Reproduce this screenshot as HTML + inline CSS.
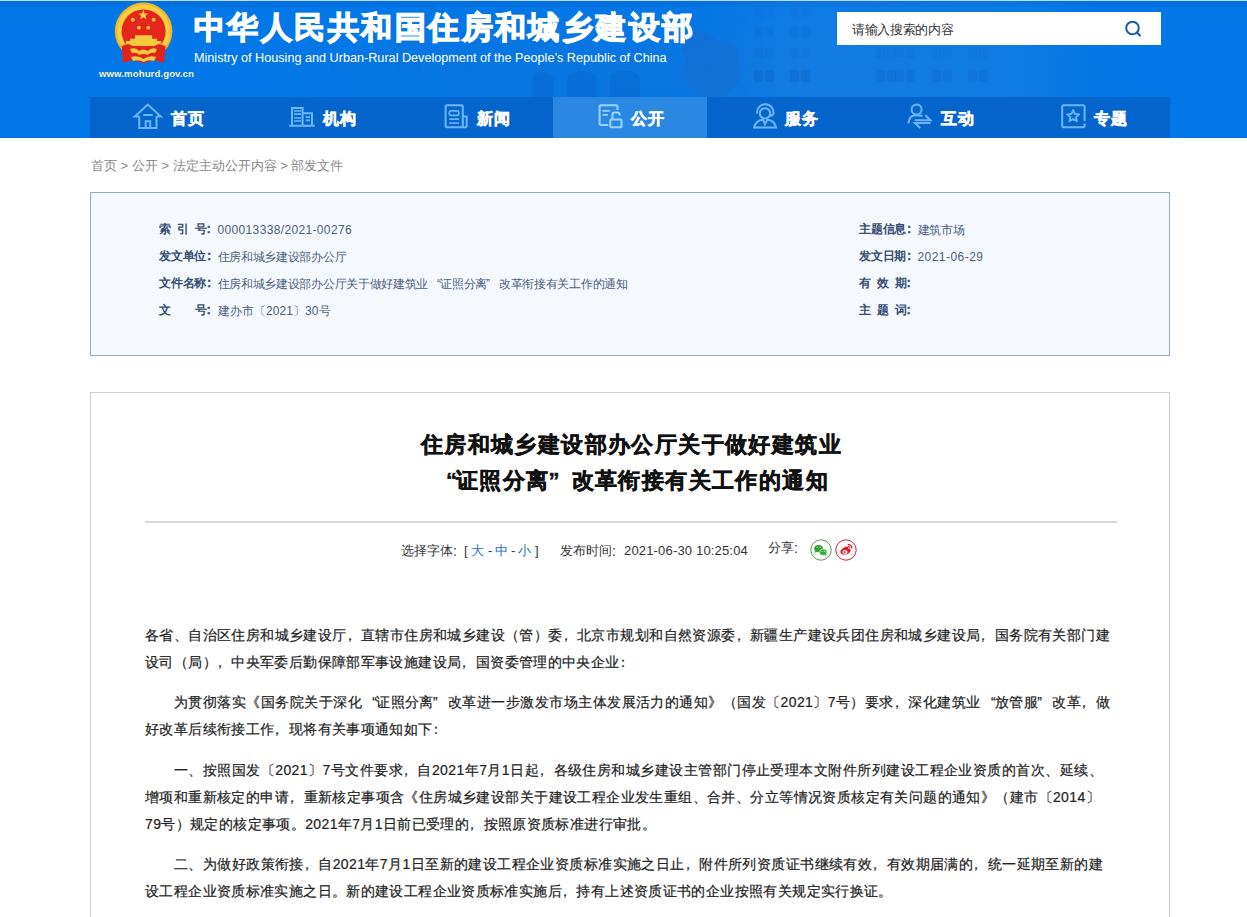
<!DOCTYPE html>
<html><head><meta charset="utf-8">
<style>
*{margin:0;padding:0;box-sizing:border-box}
html,body{width:1247px;height:917px;overflow:hidden;background:#fff;font-family:"Liberation Sans",sans-serif;color:#333}
.hd{position:absolute;left:0;top:0;width:1247px;height:138px;background:#0277e8;overflow:hidden}
.bg1{position:absolute;left:230px;top:0;width:900px;height:97px;background:radial-gradient(ellipse at 55% 75%, rgba(60,110,180,0.14), rgba(60,110,180,0.07) 50%, rgba(25,70,150,0) 75%)}
.topdk{position:absolute;left:0;top:1px;width:1247px;height:6px;background:rgba(10,40,110,0.07)}
.hd .topline{position:absolute;left:0;top:0;width:1247px;height:1px;background:#bcd9f5}
.logo{position:absolute;left:113px;top:2px;width:60px;height:62px}
.url{position:absolute;left:99px;top:68px;font-size:9.6px;font-weight:bold;color:#f4f1c4;letter-spacing:0.1px;white-space:nowrap}
.title{position:absolute;left:194px;top:7px;font-size:31px;font-weight:bold;color:#fff;white-space:nowrap;letter-spacing:2.45px;-webkit-text-stroke:1.3px #fff}
.en{position:absolute;left:194px;top:51px;font-size:12.65px;color:#fff;white-space:nowrap}
.search{position:absolute;left:837px;top:12px;width:324px;height:33px;background:#fff}
.search span{position:absolute;left:15px;top:9px;font-size:13px;letter-spacing:-0.35px;color:#333;white-space:nowrap}
.search svg{position:absolute;left:286px;top:7px}
.nav{position:absolute;left:90px;top:97px;width:1080px;height:41px;background:#0665cc}
.nav .it{position:absolute;top:0;height:41px;width:154.3px}
.nav .it.on{background:#2a88e2}
.nav .it svg{position:absolute;top:3px;left:0}
.ic{position:absolute}
.nt{position:absolute;top:109px;font-size:16px;letter-spacing:1px;color:#fff;white-space:nowrap;-webkit-text-stroke:0.5px #fff;margin-left:0.5px}
.crumb{position:absolute;left:91px;top:157px;font-size:13px;color:#888;white-space:nowrap}
.info{position:absolute;left:90px;top:192px;width:1080px;height:164px;background:#f5f9fe;border:1px solid #93acc6}
.row{position:absolute;font-size:12px;color:#4b5f7e;white-space:nowrap;height:16px;line-height:16px}
.row span{padding-top:1px}
.row i{position:absolute;top:0px;font-size:12px;font-style:normal;color:#354d72;font-weight:bold}
.row i.cl{top:0;font-size:13px;-webkit-text-stroke:0.3px #354d72}
q{quotes:none;display:inline-block;width:1em;text-align:right;text-align-last:right;letter-spacing:0;position:relative;left:1px}
q.r{text-align:left;text-align-last:left;left:-1px}
.row span{position:absolute;left:58.5px;top:0;letter-spacing:-0.3px}
.art{position:absolute;left:90px;top:392px;width:1080px;height:525px;border:1px solid #d0d0d0;border-bottom:none;background:#fff}
.t{position:absolute;left:1.5px;width:1078px;text-align:center;font-size:22px;letter-spacing:1.4px;font-weight:bold;color:#111;-webkit-text-stroke:0.5px #111;white-space:nowrap;height:36px;line-height:36px}
.hr{position:absolute;left:54px;top:128px;width:972px;height:2px;background:#d8d8d8}
.meta{position:absolute;top:150px;font-size:13px;color:#333;white-space:nowrap;height:16px;line-height:16px}
.meta a{color:#2b6cc4;text-decoration:none}
.meta.cl{font-size:14px}
.p{position:absolute;left:54px;width:965px;font-size:14px;letter-spacing:0.38px;color:#222;-webkit-text-stroke:0.2px #222;white-space:nowrap;height:27px;line-height:27px}
.j{text-align:justify;text-align-last:justify}
.p s{text-decoration:none;position:relative;left:-4px}
</style></head><body>
<div class="hd">
  <div class="bg1"></div>
  <svg class="bld" width="1247" height="97" viewBox="0 0 1247 97" style="position:absolute;left:0;top:0">
    <defs><linearGradient id="fg" x1="0" x2="1" y1="0" y2="0"><stop offset="0" stop-color="#fff" stop-opacity="0"/><stop offset="0.25" stop-color="#fff" stop-opacity="0.04"/><stop offset="0.75" stop-color="#fff" stop-opacity="0.04"/><stop offset="1" stop-color="#fff" stop-opacity="0"/></linearGradient></defs><rect x="700" y="0" width="400" height="97" fill="url(#fg)"/>
    <g fill="#0b3f9a"><rect x="754" y="7" width="9.0" height="10" opacity="0.05"/><rect x="765.0" y="7" width="9.0" height="10" opacity="0.05"/><rect x="790" y="7" width="9.0" height="10" opacity="0.05"/><rect x="801.0" y="7" width="9.0" height="10" opacity="0.05"/><rect x="754" y="27" width="9.0" height="10" opacity="0.065"/><rect x="765.0" y="27" width="9.0" height="10" opacity="0.065"/><rect x="790" y="27" width="9.0" height="10" opacity="0.065"/><rect x="801.0" y="27" width="9.0" height="10" opacity="0.065"/><rect x="754" y="48" width="9.0" height="10" opacity="0.06"/><rect x="765.0" y="48" width="9.0" height="10" opacity="0.06"/><rect x="790" y="48" width="9.0" height="10" opacity="0.06"/><rect x="801.0" y="48" width="9.0" height="10" opacity="0.06"/><rect x="754" y="70" width="9.0" height="12" opacity="0.15"/><rect x="765.0" y="70" width="9.0" height="12" opacity="0.15"/><rect x="790" y="70" width="9.0" height="12" opacity="0.15"/><rect x="801.0" y="70" width="9.0" height="12" opacity="0.15"/><rect x="876" y="48" width="9.0" height="10" opacity="0.06"/><rect x="887.0" y="48" width="9.0" height="10" opacity="0.06"/><rect x="895" y="48" width="9.0" height="10" opacity="0.06"/><rect x="906.0" y="48" width="9.0" height="10" opacity="0.06"/><rect x="932" y="48" width="9.0" height="10" opacity="0.06"/><rect x="943.0" y="48" width="9.0" height="10" opacity="0.06"/><rect x="968" y="48" width="9.0" height="10" opacity="0.06"/><rect x="979.0" y="48" width="9.0" height="10" opacity="0.06"/><rect x="876" y="70" width="9.0" height="12" opacity="0.12"/><rect x="887.0" y="70" width="9.0" height="12" opacity="0.12"/><rect x="895" y="70" width="9.0" height="12" opacity="0.12"/><rect x="906.0" y="70" width="9.0" height="12" opacity="0.12"/><rect x="932" y="70" width="9.0" height="12" opacity="0.12"/><rect x="943.0" y="70" width="9.0" height="12" opacity="0.12"/><rect x="968" y="70" width="9.0" height="12" opacity="0.12"/><rect x="979.0" y="70" width="9.0" height="12" opacity="0.12"/></g>
    <g fill="#0b4fb0" opacity="0.16">
      <path d="M532 97 V80 Q532 72 543 72 Q554 72 554 80 V97 Z"/>
      <path d="M567 97 V80 Q567 71 582 71 Q597 71 597 80 V97 Z"/>
      <path d="M610 97 V80 Q610 71 625 71 Q640 71 640 80 V97 Z"/>
    </g>
    <g fill="#0b4fb0" opacity="0.07">
      <rect x="330" y="62" width="26" height="10"/><rect x="395" y="62" width="26" height="10"/><rect x="445" y="62" width="26" height="10"/>
    </g>
    <g fill="#2f5fa8" opacity="0.2">
      <ellipse cx="712" cy="72" rx="28" ry="26"/>
      <ellipse cx="700" cy="48" rx="18" ry="16"/>
      <ellipse cx="725" cy="55" rx="14" ry="14"/>
    </g>
  </svg>
  <div class="topdk"></div><div class="topline"></div>
  <svg class="logo" style="left:108px;top:0;width:70px;height:66px" viewBox="0 0 70 66">
  <circle cx="35.6" cy="31.3" r="28.8" fill="#f2b62c"/>
  <circle cx="35.6" cy="31.3" r="26.5" fill="#f7cf3f"/>
  <circle cx="35.6" cy="31.4" r="22" fill="#e4261d"/>
  <polygon points="35.3,10 36.6,13.4 40.2,13.5 37.4,15.7 38.4,19.2 35.3,17.2 32.2,19.2 33.2,15.7 30.4,13.5 34,13.4" fill="#f9d245"/>
  <g fill="#f3c640"><circle cx="24.8" cy="19.8" r="2"/><circle cx="45.7" cy="19.8" r="2"/><circle cx="31" cy="27.7" r="1.9"/><circle cx="40.3" cy="27.7" r="1.9"/></g>
  <path d="M27 35.3 H44.2 V38.8 H27 Z M22 38.8 H49 V41 H22 Z M18 41 H53.2 V46 H18 Z" fill="#f6c93d"/>
  <path d="M13.7 46 L20 44 L35.6 50 L51 44 L57.6 46 L56 63 L46 60 L35.6 63.3 L25 60 L15 63 Z" fill="#e0241c"/>
  <path d="M22 49 Q28 47 31 51 Q35.6 48 40 51 Q43 47 49 49 L47 53 Q42 52 40 55 Q35.6 53 31 55 Q29 52 24 53 Z" fill="#f6c93d"/>
  <path d="M23 57 Q30 55 35.6 59 Q41 55 48 57 L46 61 Q40 59 35.6 62 Q31 59 25 61 Z" fill="#f6c93d"/>
</svg>
  <div class="title">中华人民共和国住房和城乡建设部</div>
  <div class="en">Ministry of Housing and Urban-Rural Development of the People’s Republic of China</div>
  <div class="url">www.mohurd.gov.cn</div>
  <div class="search"><span>请输入搜索的内容</span>
    <svg width="20" height="20" viewBox="0 0 20 20"><circle cx="9.5" cy="9" r="6.3" fill="none" stroke="#1d5ca8" stroke-width="2"/><path d="M14 13.5 L17 16.5" stroke="#1d5ca8" stroke-width="2" stroke-linecap="round"/></svg>
  </div>
  <div class="nav">
    <div class="it on" style="left:462.9px"></div>
  </div>
  <svg class="ic" style="left:130px;top:100px" width="40" height="32" viewBox="0 0 40 32" fill="none" stroke="#6db5fb" stroke-width="2">
    <path d="M9.25 16.6 H4.8 L17.8 4.6 L30.8 16.6 H26.5 M9.25 16.6 V27.9 H26.5 V16.6 M15.7 27.9 V21.2 H20.2 V27.9 M13.3 15 H22.7"/>
  </svg>
  <svg class="ic" style="left:284px;top:100px" width="40" height="32" viewBox="0 0 40 32" fill="none" stroke="#6db5fb" stroke-width="2">
    <path d="M8 25.8 V8 H18.6 V25.8 M18.6 13.2 H28 V25.8 M5.2 25.8 H30.7"/>
    <path d="M10.1 11 H17.1 M10.1 14.1 H17.1 M10.1 18 H17.1 M10.1 21 H17.1 M21.8 17.1 H26 M21.8 20.4 H26" stroke-width="1.6"/>
  </svg>
  <svg class="ic" style="left:438px;top:100px" width="40" height="32" viewBox="0 0 40 32" fill="none" stroke="#6db5fb" stroke-width="2">
    <path d="M24.8 27.3 H9 Q7.6 27.3 7.6 25.9 V6.6 Q7.6 5.2 9 5.2 H23.4 Q24.8 5.2 24.8 6.6 V27.3 H27.3 Q28.7 27.3 28.7 25.9 V16.4 H24.8"/>
    <rect x="11.3" y="10.9" width="9.5" height="4.5" rx="1.5" stroke-width="1.7"/>
    <path d="M11.2 19.2 H21 M11.2 23 H21" stroke-width="1.7"/>
  </svg>
  <svg class="ic" style="left:592px;top:100px" width="40" height="32" viewBox="0 0 40 32" fill="none" stroke="#9ad3ff" stroke-width="2">
    <path d="M25.5 10 V6.5 Q25.5 5.2 24.2 5.2 H8.9 Q7.6 5.2 7.6 6.5 V23.6 Q7.6 24.9 8.9 24.9 H16.3"/>
    <path d="M10.5 10.8 H17.8 M10.5 14.8 H16" stroke-width="1.8"/>
    <path d="M20.4 19.5 V14.5 Q20.4 12.4 22.5 12.4 H25.5 Q27.6 12.4 27.6 14.5 V15.5"/>
    <rect x="18.3" y="19.5" width="11.2" height="7.8" rx="0.8"/>
  </svg>
  <svg class="ic" style="left:746px;top:100px" width="40" height="32" viewBox="0 0 40 32" fill="none" stroke="#6db5fb" stroke-width="2">
    <path d="M11.2 13.6 A8.2 8.2 0 1 1 27.3 14.2 Q26.5 15.7 22.7 15.7"/>
    <circle cx="19" cy="13.4" r="5.2"/>
    <path d="M8.2 27.4 Q10 20.2 17 19.8 L19 24.2 L21.2 19.8 Q28.2 20.2 30 27.4 Z"/>
  </svg>
  <svg class="ic" style="left:900px;top:100px" width="40" height="32" viewBox="0 0 40 32" fill="none" stroke="#6db5fb" stroke-width="2">
    <circle cx="16.6" cy="9.6" r="5"/>
    <path d="M8.4 23.4 Q9 15.3 16 15.2 Q20 15.2 22.6 16"/>
    <path d="M14.7 20.2 H30.4 L25.3 15.2 M30.4 23.1 H15 L20.2 27.9"/>
  </svg>
  <svg class="ic" style="left:1054px;top:100px" width="40" height="32" viewBox="0 0 40 32" fill="none" stroke="#6db5fb" stroke-width="2">
    <path d="M30.6 21 V6.6 Q30.6 5.2 29.2 5.2 H9.6 Q8.2 5.2 8.2 6.6 V25.9 Q8.2 27.3 9.6 27.3 H29.2 Q30.6 27.3 30.6 25.9 V23.5"/>
    <polygon points="19.2,10 20.9,13.9 25.2,14.3 22,17.1 22.9,21.3 19.2,19.1 15.5,21.3 16.4,17.1 13.2,14.3 17.5,13.9" stroke-width="1.8" stroke-linejoin="round"/>
  </svg>
  <b class="nt" style="left:170px">首页</b>
  <b class="nt" style="left:322px">机构</b>
  <b class="nt" style="left:476px">新闻</b>
  <b class="nt" style="left:630px">公开</b>
  <b class="nt" style="left:784px">服务</b>
  <b class="nt" style="left:940px">互动</b>
  <b class="nt" style="left:1093px">专题</b>
</div>
</div>
<div class="crumb">首页 &gt; 公开 &gt; 法定主动公开内容 &gt; 部发文件</div>
<div class="info">
  <div class="row" style="left:68px;top:28px"><i style="left:0px">索</i><i style="left:18.3px">引</i><i style="left:35.6px">号</i><i class="cl" style="left:47.5px">:</i><span style="letter-spacing:0.35px">000013338/2021-00276</span></div>
  <div class="row" style="left:68px;top:55px"><i style="left:0px">发</i><i style="left:11.8px">文</i><i style="left:23.6px">单</i><i style="left:35.4px">位</i><i class="cl" style="left:48px">:</i><span>住房和城乡建设部办公厅</span></div>
  <div class="row" style="left:68px;top:82px"><i style="left:0px">文</i><i style="left:11.8px">件</i><i style="left:23.6px">名</i><i style="left:35.4px">称</i><i class="cl" style="left:48px">:</i><span>住房和城乡建设部办公厅关于做好建筑业<q>“</q>证照分离<q class="r">”</q>改革衔接有关工作的通知</span></div>
  <div class="row" style="left:68px;top:109px"><i style="left:0px">文</i><i style="left:35.6px">号</i><i class="cl" style="left:47.5px">:</i><span style="letter-spacing:0.1px">建办市〔2021〕30号</span></div>
  <div class="row" style="left:768px;top:28px"><i style="left:0px">主</i><i style="left:11.8px">题</i><i style="left:23.6px">信</i><i style="left:35.4px">息</i><i class="cl" style="left:48px">:</i><span>建筑市场</span></div>
  <div class="row" style="left:768px;top:55px"><i style="left:0px">发</i><i style="left:11.8px">文</i><i style="left:23.6px">日</i><i style="left:35.4px">期</i><i class="cl" style="left:48px">:</i><span style="letter-spacing:0.45px">2021-06-29</span></div>
  <div class="row" style="left:768px;top:82px"><i style="left:0px">有</i><i style="left:18.3px">效</i><i style="left:35.6px">期</i><i class="cl" style="left:47.5px">:</i><span></span></div>
  <div class="row" style="left:768px;top:109px"><i style="left:0px">主</i><i style="left:18.3px">题</i><i style="left:35.6px">词</i><i class="cl" style="left:47.5px">:</i><span></span></div>
</div>
<div class="art">
  <div class="t" style="top:34px">住房和城乡建设部办公厅关于做好建筑业</div>
  <div class="t" style="top:70px"><q>“</q>证照分离<q class="r">”</q>改革衔接有关工作的通知</div>
  <div class="hr"></div>
  <div class="meta" style="left:310px">选择字体</div>
  <div class="meta cl" style="left:362px">:</div>
  <div class="meta" style="left:373px">[</div>
  <div class="meta" style="left:380px"><a>大</a></div>
  <div class="meta" style="left:397px">-</div>
  <div class="meta" style="left:404px"><a>中</a></div>
  <div class="meta" style="left:420px">-</div>
  <div class="meta" style="left:427px"><a>小</a></div>
  <div class="meta" style="left:444px">]</div>
  <div class="meta" style="left:469px">发布时间</div>
  <div class="meta cl" style="left:521px">:</div>
  <div class="meta" style="left:533px;letter-spacing:0.17px">2021-06-30 10:25:04</div>
  <div class="meta" style="left:677px;top:147px">分享</div>
  <div class="meta cl" style="left:703px;top:147px">:</div>
  <svg style="position:absolute;left:719px;top:146px" width="22" height="22" viewBox="0 0 22 22">
    <circle cx="11" cy="11" r="10.2" fill="#fff" stroke="#5a9a5a" stroke-width="1"/>
    <ellipse cx="8.6" cy="9.6" rx="4.4" ry="3.7" fill="#2ea02e"/>
    <path d="M5.5 11.8 L4.6 14 L7.2 12.8 Z" fill="#2ea02e"/>
    <ellipse cx="13.2" cy="13.2" rx="3.8" ry="3.2" fill="#35ad35" stroke="#fff" stroke-width="0.6"/>
    <path d="M15.6 15.2 L16.8 17 L14.4 16 Z" fill="#35ad35"/>
    <circle cx="7.2" cy="8.3" r="0.7" fill="#9be79b"/><circle cx="10.1" cy="8.3" r="0.7" fill="#9be79b"/>
    <circle cx="12" cy="12.4" r="0.6" fill="#b5f2b5"/><circle cx="14.5" cy="12.4" r="0.6" fill="#b5f2b5"/>
  </svg>
  <svg style="position:absolute;left:744px;top:146px" width="22" height="22" viewBox="0 0 22 22">
    <circle cx="11" cy="11" r="10.2" fill="#fff" stroke="#c8283a" stroke-width="1"/>
    <path d="M9.6 8.3 Q12.5 6.8 13.3 8.2 Q13.6 9 13.2 9.9 Q15.8 9.4 15.7 11.3 Q15.5 14.6 10.4 15.6 Q6 16 5.4 13.2 Q5 10.6 9.6 8.3 Z" fill="#e0162b"/>
    <ellipse cx="10" cy="13" rx="2.6" ry="1.9" fill="#fff"/>
    <circle cx="9.6" cy="13.1" r="1.2" fill="#c85a4a"/>
    <path d="M13.2 5.6 Q16.8 5.4 16.8 9" fill="none" stroke="#e0162b" stroke-width="1.2" stroke-linecap="round"/>
    <path d="M13.5 7.4 Q15.2 7.3 15.1 8.9" fill="none" stroke="#e0162b" stroke-width="1" stroke-linecap="round"/>
  </svg>
  <div class="p j" style="top:229px">各省、自治区住房和城乡建设厅<s>，</s>直辖市住房和城乡建设（管）委<s>，</s>北京市规划和自然资源委<s>，</s>新疆生产建设兵团住房和城乡建设局<s>，</s>国务院有关部门建</div>
  <div class="p" style="top:256px">设司（局）<s>，</s>中央军委后勤保障部军事设施建设局<s>，</s>国资委管理的中央企业<s>：</s></div>
  <div class="p j" style="top:296px;left:83px;width:936px">为贯彻落实《国务院关于深化<q>“</q>证照分离<q class="r">”</q>改革进一步激发市场主体发展活力的通知》（国发〔2021〕7号）要求<s>，</s>深化建筑业<q>“</q>放管服<q class="r">”</q>改革<s>，</s>做</div>
  <div class="p" style="top:323px">好改革后续衔接工作<s>，</s>现将有关事项通知如下<s>：</s></div>
  <div class="p j" style="top:364px;left:83px;width:929px">一、按照国发〔2021〕7号文件要求<s>，</s>自2021年7月1日起<s>，</s>各级住房和城乡建设主管部门停止受理本文附件所列建设工程企业资质的首次、延续、</div>
  <div class="p j" style="top:391px;width:955px">增项和重新核定的申请<s>，</s>重新核定事项含《住房城乡建设部关于建设工程企业发生重组、合并、分立等情况资质核定有关问题的通知》（建市〔2014〕</div>
  <div class="p" style="top:418px">79号）规定的核定事项。2021年7月1日前已受理的<s>，</s>按照原资质标准进行审批。</div>
  <div class="p j" style="top:458px;left:83px;width:929px">二、为做好政策衔接<s>，</s>自2021年7月1日至新的建设工程企业资质标准实施之日止<s>，</s>附件所列资质证书继续有效<s>，</s>有效期届满的<s>，</s>统一延期至新的建</div>
  <div class="p" style="top:485px">设工程企业资质标准实施之日。新的建设工程企业资质标准实施后<s>，</s>持有上述资质证书的企业按照有关规定实行换证。</div>
</div>
</body></html>
